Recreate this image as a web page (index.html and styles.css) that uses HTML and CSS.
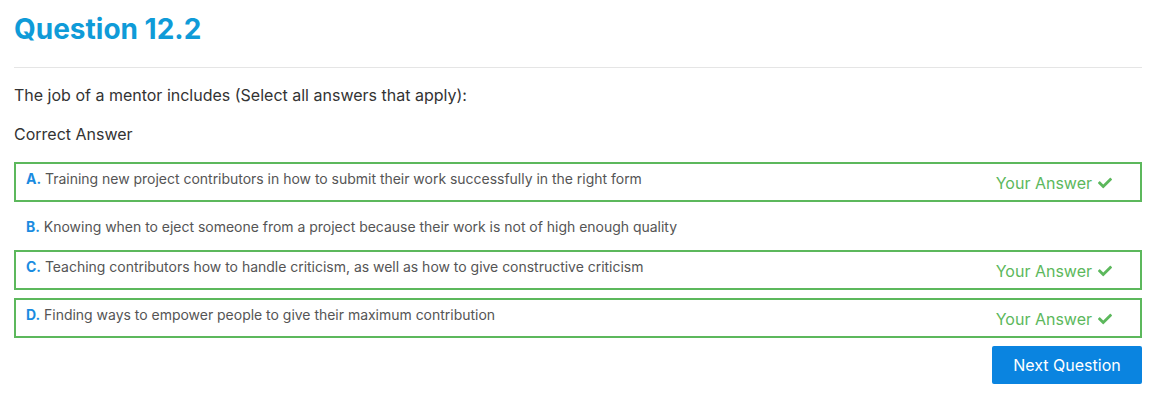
FILE: index.html
```html
<!DOCTYPE html>
<html>
<head>
<meta charset="utf-8">
<link rel="stylesheet" href="styles.css">
</head>
<body>
<div class="page">
  <h1 class="title">Question 12.2</h1>
  <hr class="rule">
  <p class="question">The job of a mentor includes (Select all answers that apply):</p>
  <p class="correct">Correct Answer</p>
  <div class="options">
    <div class="option selected">
      <div class="opt-text"><span class="letter">A.</span> Training new project contributors in how to submit their work successfully in the right form</div>
      <div class="your">Your Answer <svg class="check" viewBox="0 0 512 512" width="14" height="14"><path d="M173.9 439.4l-166.4-166.4c-10-10-10-26.2 0-36.2l36.2-36.2c10-10 26.2-10 36.2 0L192 312.7 432.1 72.6c10-10 26.2-10 36.2 0l36.2 36.2c10 10 10 26.2 0 36.2L210.1 439.4c-10 10-26.2 10-36.2 0z" fill="currentColor"/></svg></div>
    </div>
    <div class="option plain">
      <div class="opt-text"><span class="letter">B.</span> Knowing when to eject someone from a project because their work is not of high enough quality</div>
    </div>
    <div class="option selected">
      <div class="opt-text"><span class="letter">C.</span> Teaching contributors how to handle criticism, as well as how to give constructive criticism</div>
      <div class="your">Your Answer <svg class="check" viewBox="0 0 512 512" width="14" height="14"><path d="M173.9 439.4l-166.4-166.4c-10-10-10-26.2 0-36.2l36.2-36.2c10-10 26.2-10 36.2 0L192 312.7 432.1 72.6c10-10 26.2-10 36.2 0l36.2 36.2c10 10 10 26.2 0 36.2L210.1 439.4c-10 10-26.2 10-36.2 0z" fill="currentColor"/></svg></div>
    </div>
    <div class="option selected">
      <div class="opt-text"><span class="letter">D.</span> Finding ways to empower people to give their maximum contribution</div>
      <div class="your">Your Answer <svg class="check" viewBox="0 0 512 512" width="14" height="14"><path d="M173.9 439.4l-166.4-166.4c-10-10-10-26.2 0-36.2l36.2-36.2c10-10 26.2-10 36.2 0L192 312.7 432.1 72.6c10-10 26.2-10 36.2 0l36.2 36.2c10 10 10 26.2 0 36.2L210.1 439.4c-10 10-26.2 10-36.2 0z" fill="currentColor"/></svg></div>
    </div>
  </div>
  <div class="actions">
    <button class="next">Next Question</button>
  </div>
</div>
</body>
</html>
```
FILE: styles.css
```css
* { box-sizing: border-box; }
body {
  margin: 0;
  font-family: Inter, "Noto Sans", sans-serif;
  color: #333;
  background: #fff;
}
.page {
  padding: 12px 15px 0 14px;
}
.title {
  margin: 0;
  font-size: 28px;
  line-height: 34px;
  font-weight: 700;
  color: #0f9bd8;
}
.rule {
  margin: 21px 0 0 0;
  border: 0;
  border-top: 1px solid #e5e5e5;
}
.question {
  margin: 17px 0 0 0;
  font-size: 16px;
  line-height: 20px;
}
.correct {
  margin: 19px 0 0 0;
  font-size: 16px;
  line-height: 20px;
}
.options {
  margin-top: 18px;
  display: flex;
  flex-direction: column;
  gap: 8px;
}
.option {
  display: flex;
  justify-content: space-between;
  align-items: flex-start;
  border: 2px solid transparent;
  padding: 5px 28px 7px 10px;
}
.option.selected {
  border-color: #5cb85c;
  height: 40px;
}
.option.plain {
  height: 32px;
}
.opt-text {
  font-size: 14px;
  line-height: 20px;
  color: #555;
  letter-spacing: -0.02px;
}
.letter {
  color: #1a8be0;
  font-weight: 700;
}
.your {
  font-size: 16px;
  line-height: 20px;
  padding-top: 4px;
  color: #5cb85c;
  display: flex;
  align-items: center;
  gap: 6px;
}
.check {
  display: block;
}
.actions {
  display: flex;
  justify-content: flex-end;
  margin-top: 8px;
}
.next {
  width: 150px;
  height: 38px;
  background: #0a84e0;
  color: #fff;
  border: 0;
  border-radius: 2px;
  font-family: Inter, "Noto Sans", sans-serif;
  font-size: 16px;
}
```
